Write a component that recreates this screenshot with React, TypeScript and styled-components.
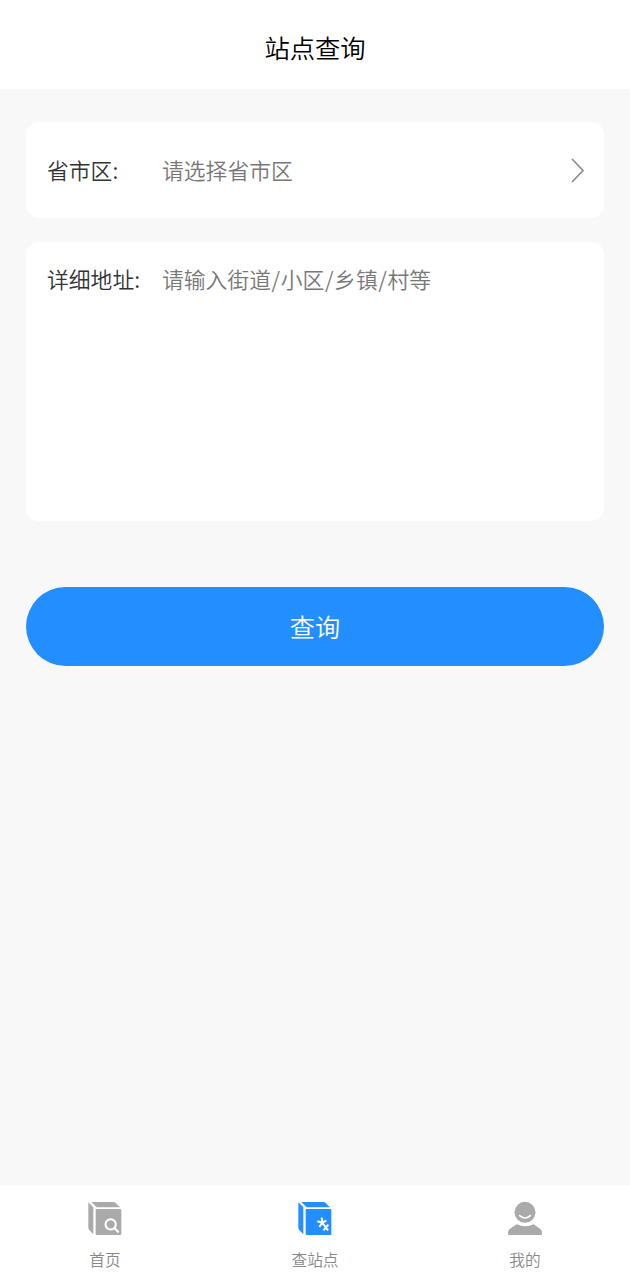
import React from "react";
import styled, { createGlobalStyle } from "styled-components";

const GlobalStyle = createGlobalStyle`
  * { box-sizing: border-box; }
  body {
    margin: 0;
    background: #f8f8f8;
    font-family: "Noto Sans CJK SC", "Noto Sans", sans-serif;
  }
`;

const Page = styled.div`
  display: flex;
  flex-direction: column;
  height: 100vh;
  min-height: 1280px;
  background: #f8f8f8;
`;

const Header = styled.header`
  display: flex;
  align-items: center;
  justify-content: center;
  height: 89px;
  padding-top: 5px;
  flex-shrink: 0;
  background: #fff;
`;

const Title = styled.h1`
  margin: 0;
  font-size: 25.3px;
  line-height: 36px;
  font-weight: 350;
  color: #000;
`;

const Content = styled.main`
  display: flex;
  flex: 1;
  flex-direction: column;
  padding: 33px 26px 0;
`;

const Card = styled.section<{ $height: number; $top?: boolean }>`
  display: flex;
  align-items: ${(p) => (p.$top ? "flex-start" : "center")};
  height: ${(p) => p.$height}px;
  padding: ${(p) => (p.$top ? "21px 19px 0 21px" : "0 19px 0 21px")};
  margin-bottom: 24px;
  border-radius: 13px;
  background: #fff;
`;

const Label = styled.span`
  width: 115px;
  padding-bottom: 2px;
  font-size: 21.8px;
  font-weight: 350;
  line-height: 31px;
  color: #333;
  white-space: nowrap;
`;

const Placeholder = styled.span`
  flex: 1;
  padding-bottom: 2px;
  font-size: 21.8px;
  font-weight: 350;
  line-height: 31px;
  color: #777;
  white-space: nowrap;
`;

const Slash = styled.span`
  margin: 0 0.6px;
`;

const SubmitButton = styled.button`
  height: 79px;
  margin-top: 42px;
  padding: 0 0 2px;
  border: 0;
  border-radius: 40px;
  background: #238eff;
  color: #fff;
  font-family: inherit;
  font-size: 25.2px;
  font-weight: 350;
  line-height: 36px;
`;

const TabBar = styled.nav`
  display: flex;
  flex-shrink: 0;
  height: 95px;
  background: #fff;
`;

const Tab = styled.a<{ $active?: boolean }>`
  display: flex;
  flex: 1;
  flex-direction: column;
  align-items: center;
  padding-top: 16px;
  color: ${(p) => (p.$active ? "#238eff" : "#aaa")};

  svg {
    display: block;
  }
`;

const TabLabel = styled.span`
  margin-top: 11px;
  font-size: 15.7px;
  font-weight: 350;
  line-height: 24px;
  color: #888;
`;

const Cube = ({ children }: { children: React.ReactNode }) => (
  <svg width="36" height="36" viewBox="36 33 108 108" fill="none">
    <path d="M40 37L55 52V133L43 120Q40 117 40 113Z" fill="currentColor" />
    <path d="M49 36H116Q119 36 121 38L135 52H65Z" fill="currentColor" />
    <path d="M62 57H135Q139 57 139 61V131Q139 135 135 135H66Q62 135 62 131Z" fill="currentColor" />
    {children}
  </svg>
);

const HomeIcon = () => (
  <Cube>
    <circle cx="107" cy="103" r="15.5" stroke="#fff" strokeWidth="6" />
    <path d="M118 114L129 125" stroke="#fff" strokeWidth="7" strokeLinecap="round" />
  </Cube>
);

const StationIcon = () => (
  <Cube>
    <path
      d="M110 83L112 98M97 94L112 98M124 92L112 98M103 111L112 98L129 121M130 104L115 121"
      stroke="#fff"
      strokeWidth="6"
    />
  </Cube>
);

const ProfileIcon = () => (
  <svg width="36" height="36" viewBox="37 33 108 108" fill="none">
    <circle cx="91" cy="67" r="31.5" fill="currentColor" />
    <path d="M75 77Q91 91 107 77" stroke="#fff" strokeWidth="5" strokeLinecap="round" />
    <path
      d="M66 103Q91 115 117 103L137 117Q142 121 142 128V132Q142 135 138 135H44Q40 135 40 132V128Q40 121 45 117Z"
      fill="currentColor"
    />
  </svg>
);

const ChevronIcon = () => (
  <svg width="16" height="28" viewBox="0 0 16 28" fill="none">
    <path d="M3 3L14 14.5L3 26" stroke="#8c8c8c" strokeWidth="1.7" />
  </svg>
);

export default function App() {
  return (
    <>
      <GlobalStyle />
      <Page>
        <Header>
          <Title>站点查询</Title>
        </Header>
        <Content>
          <Card $height={96}>
            <Label>省市区:</Label>
            <Placeholder>请选择省市区</Placeholder>
            <ChevronIcon />
          </Card>
          <Card $height={279} $top>
            <Label>详细地址:</Label>
            <Placeholder>
              请输入街道<Slash>/</Slash>小区<Slash>/</Slash>乡镇<Slash>/</Slash>村等
            </Placeholder>
          </Card>
          <SubmitButton>查询</SubmitButton>
        </Content>
        <TabBar>
          <Tab>
            <HomeIcon />
            <TabLabel>首页</TabLabel>
          </Tab>
          <Tab $active>
            <StationIcon />
            <TabLabel>查站点</TabLabel>
          </Tab>
          <Tab>
            <ProfileIcon />
            <TabLabel>我的</TabLabel>
          </Tab>
        </TabBar>
      </Page>
    </>
  );
}
